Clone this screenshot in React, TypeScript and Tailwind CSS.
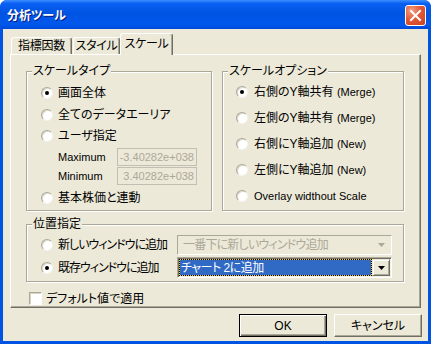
import type { ReactNode } from 'react';

const ui =
  "[font-family:'Liberation_Sans','Noto_Sans_CJK_JP',sans-serif] [font-feature-settings:'palt'] text-[12px] leading-[14px] text-black";

function Radio({ checked }: { checked?: boolean }) {
  return (
    <span className="flex h-[12px] w-[12px] shrink-0 items-center justify-center rounded-full border border-t-[#ACA899] border-l-[#ACA899] border-r-[#F4F3EE] border-b-[#F4F3EE] bg-white shadow-[inset_1px_1px_0_#DCD9CC]">
      {checked && <span className="h-[4px] w-[4px] rounded-full bg-black" />}
    </span>
  );
}

function RadioRow({ checked, children, className }: { checked?: boolean; children: ReactNode; className: string }) {
  return (
    <div className={`flex items-center gap-[5px] ${className}`}>
      <Radio checked={checked} />
      <span className="whitespace-nowrap">{children}</span>
    </div>
  );
}

function Group({ title, className, children }: { title: string; className: string; children: ReactNode }) {
  return (
    <fieldset className={`border border-[#ACA899] shadow-[inset_1px_1px_0_#fff,1px_1px_0_#fff] ${className}`}>
      <legend className="ml-[5px] bg-[#ECE9D8] px-[1px] leading-[14px]">{title}</legend>
      {children}
    </fieldset>
  );
}

function Arrow({ color }: { color: string }) {
  return (
    <svg width="7" height="4" viewBox="0 0 7 4">
      <path d="M0 0h7L3.5 4z" fill={color} />
    </svg>
  );
}

function TitleBar() {
  return (
    <div className="flex h-[29px] shrink-0 items-center justify-between bg-[linear-gradient(180deg,#3d8fff_0%,#0a60f2_12%,#0054e3_45%,#0058ec_85%,#0048d8_100%)] pl-[7px] pr-[5px]">
      <span className="[font-family:'Noto_Sans_CJK_JP',sans-serif] text-[12px] font-bold text-white [text-shadow:1px_1px_0_#0a1a80]">
        分析ツール
      </span>
      <div className="mt-[1px] h-[21px] w-[21px] rounded-[3px] border border-white bg-[radial-gradient(circle_at_30%_25%,#f2a085_0%,#e2593a_45%,#c8401f_100%)]">
        <svg width="19" height="19" viewBox="0 0 19 19">
          <path d="M5 5l9 9M14 5l-9 9" stroke="#fff" strokeWidth="2" strokeLinecap="square" />
        </svg>
      </div>
    </div>
  );
}

function Tabs() {
  const tab =
    'flex items-center justify-center rounded-t-[3px] border-t border-l border-r border-t-white border-l-white border-r-[#716F64] bg-[#ECE9D8] shadow-[inset_-1px_0_0_#ACA899] tracking-[-0.3px]';
  return (
    <div className="flex h-[21px] items-end pl-[1px]">
      <div className={`${tab} h-[17px] w-[61px]`}>指標因数</div>
      <div className={`${tab} ml-[1px] h-[17px] w-[47px]`}>スタイル</div>
      <div className={`${tab} relative z-10 -mb-px h-[22px] w-[53px] pb-[2px]`}>スケール</div>
    </div>
  );
}

function ValueBox({ value }: { value: string }) {
  return (
    <div className="flex h-[18px] w-[80px] items-center justify-end border border-[#C2BFB2] bg-[#ECE9D8] pr-[2px] text-[11px] text-[#ACA899]">
      {value}
    </div>
  );
}

export default function App() {
  return (
    <div className={`flex h-[344px] w-[431px] flex-col overflow-hidden rounded-t-[7px] bg-[#0054E3] ${ui}`}>
      <TitleBar />
      <div className="mx-[3px] mb-[3px] flex flex-1 flex-col bg-[#ECE9D8] px-[7px] pt-[4px]">
        <Tabs />
        <div className="flex h-[254px] flex-col border border-t-white border-l-white border-r-[#716F64] border-b-[#716F64] pl-[15px] pt-[9px] shadow-[inset_-1px_-1px_0_#ACA899]">
          <div className="flex gap-[10px]">
            <Group title="スケールタイプ" className="h-[147px] w-[186px]">
              <div className="flex flex-col pl-[14px] pt-[4px]">
                <RadioRow checked className="h-[22px]">画面全体</RadioRow>
                <RadioRow className="h-[22px]">全てのデータエーリア</RadioRow>
                <RadioRow className="h-[20px]">ユーザ指定</RadioRow>
                <div className="ml-[17px] mt-[2px] flex h-[18px] items-center">
                  <span className="w-[59px] text-[11px]">Maximum</span>
                  <ValueBox value="-3.40282e+038" />
                </div>
                <div className="ml-[17px] mt-[1px] flex h-[18px] items-center">
                  <span className="w-[59px] text-[11px]">Minimum</span>
                  <ValueBox value="3.40282e+038" />
                </div>
                <RadioRow className="mt-[2px] h-[22px]">基本株価と連動</RadioRow>
              </div>
            </Group>
            <Group title="スケールオプション" className="h-[147px] w-[182px]">
              <div className="flex flex-col pl-[13px] pt-[1px]">
                <RadioRow checked className="h-[26px] gap-[6px]">
                  右側のY軸共有 <span className="text-[11px]">(Merge)</span>
                </RadioRow>
                <RadioRow className="h-[26px] gap-[6px]">
                  左側のY軸共有 <span className="text-[11px]">(Merge)</span>
                </RadioRow>
                <RadioRow className="h-[26px] gap-[6px]">
                  右側にY軸追加 <span className="text-[11px]">(New)</span>
                </RadioRow>
                <RadioRow className="h-[26px] gap-[6px]">
                  左側にY軸追加 <span className="text-[11px]">(New)</span>
                </RadioRow>
                <RadioRow className="h-[26px] gap-[6px]">
                  <span className="text-[11px]">Overlay widthout Scale</span>
                </RadioRow>
              </div>
            </Group>
          </div>

          <Group title="位置指定" className="mt-[6px] h-[65px] w-[378px]">
            <div className="flex flex-col pl-[14px] pt-[4px]">
              <div className="flex h-[20px] items-center">
                <RadioRow className="w-[136px] tracking-[-1px]">新しいウィンドウに追加</RadioRow>
                <div className="flex h-[20px] w-[215px] items-center border border-t-[#ACA899] border-l-[#ACA899] border-r-white border-b-white pl-[5px] pr-[6px] text-[#ACA899]">
                  <span className="flex-1 whitespace-nowrap tracking-[-0.8px]">一番下に新しいウィンドウ追加</span>
                  <Arrow color="#ACA899" />
                </div>
              </div>
              <div className="mt-[2px] flex h-[21px] items-center">
                <RadioRow checked className="w-[136px] tracking-[-1px]">既存ウィンドウに追加</RadioRow>
                <div className="flex h-[21px] w-[215px] border border-t-[#ACA899] border-l-[#ACA899] border-r-white border-b-white bg-white p-[1px] shadow-[inset_1px_1px_0_#716F64,inset_-1px_-1px_0_#F1EFE2]">
                  <div className="flex-1 bg-[#F2CE4A]">
                    <div className="flex h-full items-center border border-dotted border-black bg-[#316AC5] bg-clip-padding pl-[1px] tracking-[-0.5px] text-white">
                      チャート 2に追加
                    </div>
                  </div>
                  <div className="flex w-[18px] items-center justify-center border border-t-[#ECE9D8] border-l-[#ECE9D8] border-r-[#716F64] border-b-[#716F64] bg-[#ECE9D8] shadow-[inset_1px_1px_0_#fff,inset_-1px_-1px_0_#ACA899]">
                    <Arrow color="#000" />
                  </div>
                </div>
              </div>
            </div>
          </Group>

          <div className="ml-[3px] mt-[10px] flex h-[13px] items-center gap-[4px]">
            <span className="h-[13px] w-[13px] border border-t-[#ACA899] border-l-[#ACA899] border-r-white border-b-white bg-white shadow-[inset_1px_1px_0_#D8D5C8]" />
            <span>デフォルト値で適用</span>
          </div>
        </div>

        <div className="-mr-px mt-[6px] flex justify-end gap-[7px]">
          <button className="flex h-[23px] w-[88px] items-center justify-center border border-black bg-[#ECE9D8] shadow-[inset_1px_1px_0_#fff,inset_-1px_-1px_0_#716F64,inset_-2px_-2px_0_#ACA899]">
            OK
          </button>
          <button className="flex h-[23px] w-[88px] items-center justify-center border border-t-white border-l-white border-r-[#716F64] border-b-[#716F64] bg-[#ECE9D8] shadow-[inset_-1px_-1px_0_#ACA899]">
            キャンセル
          </button>
        </div>
      </div>
    </div>
  );
}
